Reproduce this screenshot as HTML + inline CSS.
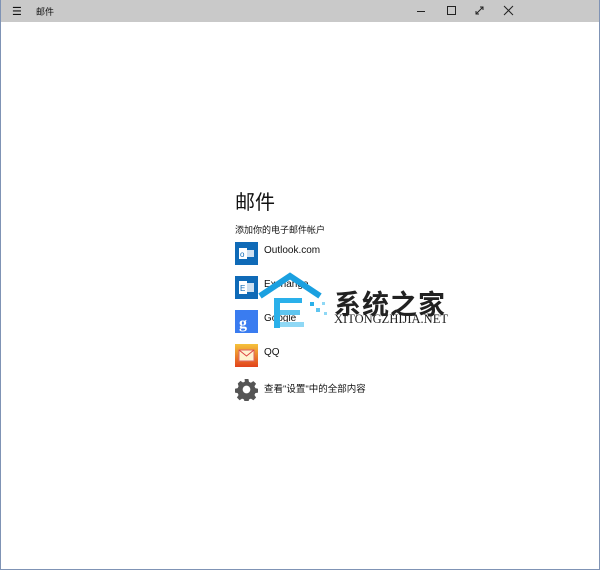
<!DOCTYPE html>
<html><head><meta charset="utf-8"><style>
*{margin:0;padding:0;box-sizing:border-box}
body{width:600px;height:570px;position:relative;background:#fff;font-family:"Liberation Sans","Noto Sans CJK SC",sans-serif;overflow:hidden}
.frame{position:absolute;inset:0;border:1px solid #7f93b5;border-top:none}
.tb{position:absolute;left:0;top:0;width:600px;height:22px;background:#c9c9c9}
.t{position:absolute;font-size:9px;color:#111;white-space:nowrap}
.ic{position:absolute;left:235px;width:23px;height:23px}
.lbl{position:absolute;left:264px;font-size:10px;color:#111}
</style></head><body>
<div class="tb"></div>
<div class="frame"></div>
<div class="t" style="left:12px;top:5px;font-size:11px">☰</div>
<div class="t" style="left:36px;top:5px">邮件</div>
<div style="position:absolute;left:417px;top:11px;width:8px;height:1px;background:#222"></div>
<div style="position:absolute;left:447px;top:6px;width:9px;height:9px;border:1px solid #222"></div>
<svg style="position:absolute;left:474px;top:5px" width="11" height="11"><path d="M2 9L9 2M6 2h3v3M2 6v3h3" stroke="#222" fill="none"/></svg>
<svg style="position:absolute;left:503px;top:5px" width="11" height="11"><path d="M1 1L10 10M10 1L1 10" stroke="#222"/></svg>
<div class="t" style="left:235px;top:186px;font-size:20px">邮件</div>
<div class="t" style="left:235px;top:223px">添加你的电子邮件帐户</div>
<svg class="ic" style="top:242px" viewBox="0 0 23 23"><rect width="23" height="23" fill="#0f6ab7"/><rect x="4" y="6" width="8" height="11" fill="#fff"/><rect x="12" y="8" width="7" height="7" fill="#cfe0f0"/><text x="5" y="15" font-size="8" fill="#0f6ab7" font-family="Liberation Sans">o</text></svg>
<div class="lbl" style="top:245px">Outlook.com</div>
<svg class="ic" style="top:276px" viewBox="0 0 23 23"><rect width="23" height="23" fill="#0f6ab7"/><rect x="4" y="5" width="8" height="13" fill="#fff"/><rect x="12" y="7" width="7" height="9" fill="#cfe0f0"/><text x="5" y="15" font-size="8" fill="#0f6ab7" font-family="Liberation Sans">E</text></svg>
<div class="lbl" style="top:279px">Exchange</div>
<svg class="ic" style="top:310px" viewBox="0 0 23 23"><rect width="23" height="23" fill="#3a7cf0"/><text x="4" y="18" font-size="16" font-weight="bold" fill="#fff" font-family="Liberation Serif">g</text></svg>
<div class="lbl" style="top:313px">Google</div>
<svg class="ic" style="top:344px" viewBox="0 0 23 23"><defs><linearGradient id="q" x1="0" y1="0" x2="0" y2="1"><stop offset="0" stop-color="#f5c33b"/><stop offset="1" stop-color="#e2421c"/></linearGradient></defs><rect width="23" height="23" fill="url(#q)"/><rect x="4" y="6" width="15" height="11" fill="#fff3d0" stroke="#d66" stroke-width="1"/><path d="M4 6l7.5 6L19 6" stroke="#d44" fill="none"/></svg>
<div class="lbl" style="top:347px">QQ</div>
<svg class="ic" style="top:378px" viewBox="0 0 24 24"><path fill="#555" d="M10 1h4l.6 3 2 .9 2.6-1.7 2.8 2.8-1.7 2.6.9 2 3 .6v4l-3 .6-.9 2 1.7 2.6-2.8 2.8-2.6-1.7-2 .9-.6 3h-4l-.6-3-2-.9-2.6 1.7-2.8-2.8 1.7-2.6-.9-2-3-.6v-4l3-.6.9-2L2.9 5.8 5.7 3l2.6 1.7 2-.9z"/><circle cx="12" cy="12" r="4" fill="#fff"/></svg>
<div class="lbl" style="top:381px;font-size:9.5px">查看"设置"中的全部内容</div>
<svg style="position:absolute;left:258px;top:272px" width="76" height="60" viewBox="0 0 76 60"><path d="M2 24L32 4l30 20" fill="none" stroke="#1aa0e0" stroke-width="6"/><rect x="16" y="26" width="6" height="30" fill="#2ab0ea"/><rect x="22" y="26" width="22" height="5" fill="#2ab0ea"/><rect x="22" y="38" width="20" height="5" fill="#5ec5f0"/><rect x="22" y="50" width="24" height="5" fill="#8fd8f5"/><rect x="52" y="30" width="4" height="4" fill="#2ab0ea"/><rect x="58" y="36" width="4" height="4" fill="#5ec5f0"/><rect x="64" y="30" width="3" height="3" fill="#8fd8f5"/><rect x="66" y="40" width="3" height="3" fill="#8fd8f5"/></svg>
<div class="t" style="left:334px;top:283px;font-size:27px;font-weight:bold;color:#222;letter-spacing:1px">系统之家</div>
<div class="t" style="left:334px;top:312px;font-size:12.5px;font-family:'Liberation Serif',serif;color:#222">XITONGZHIJIA.NET</div>
</body></html>
